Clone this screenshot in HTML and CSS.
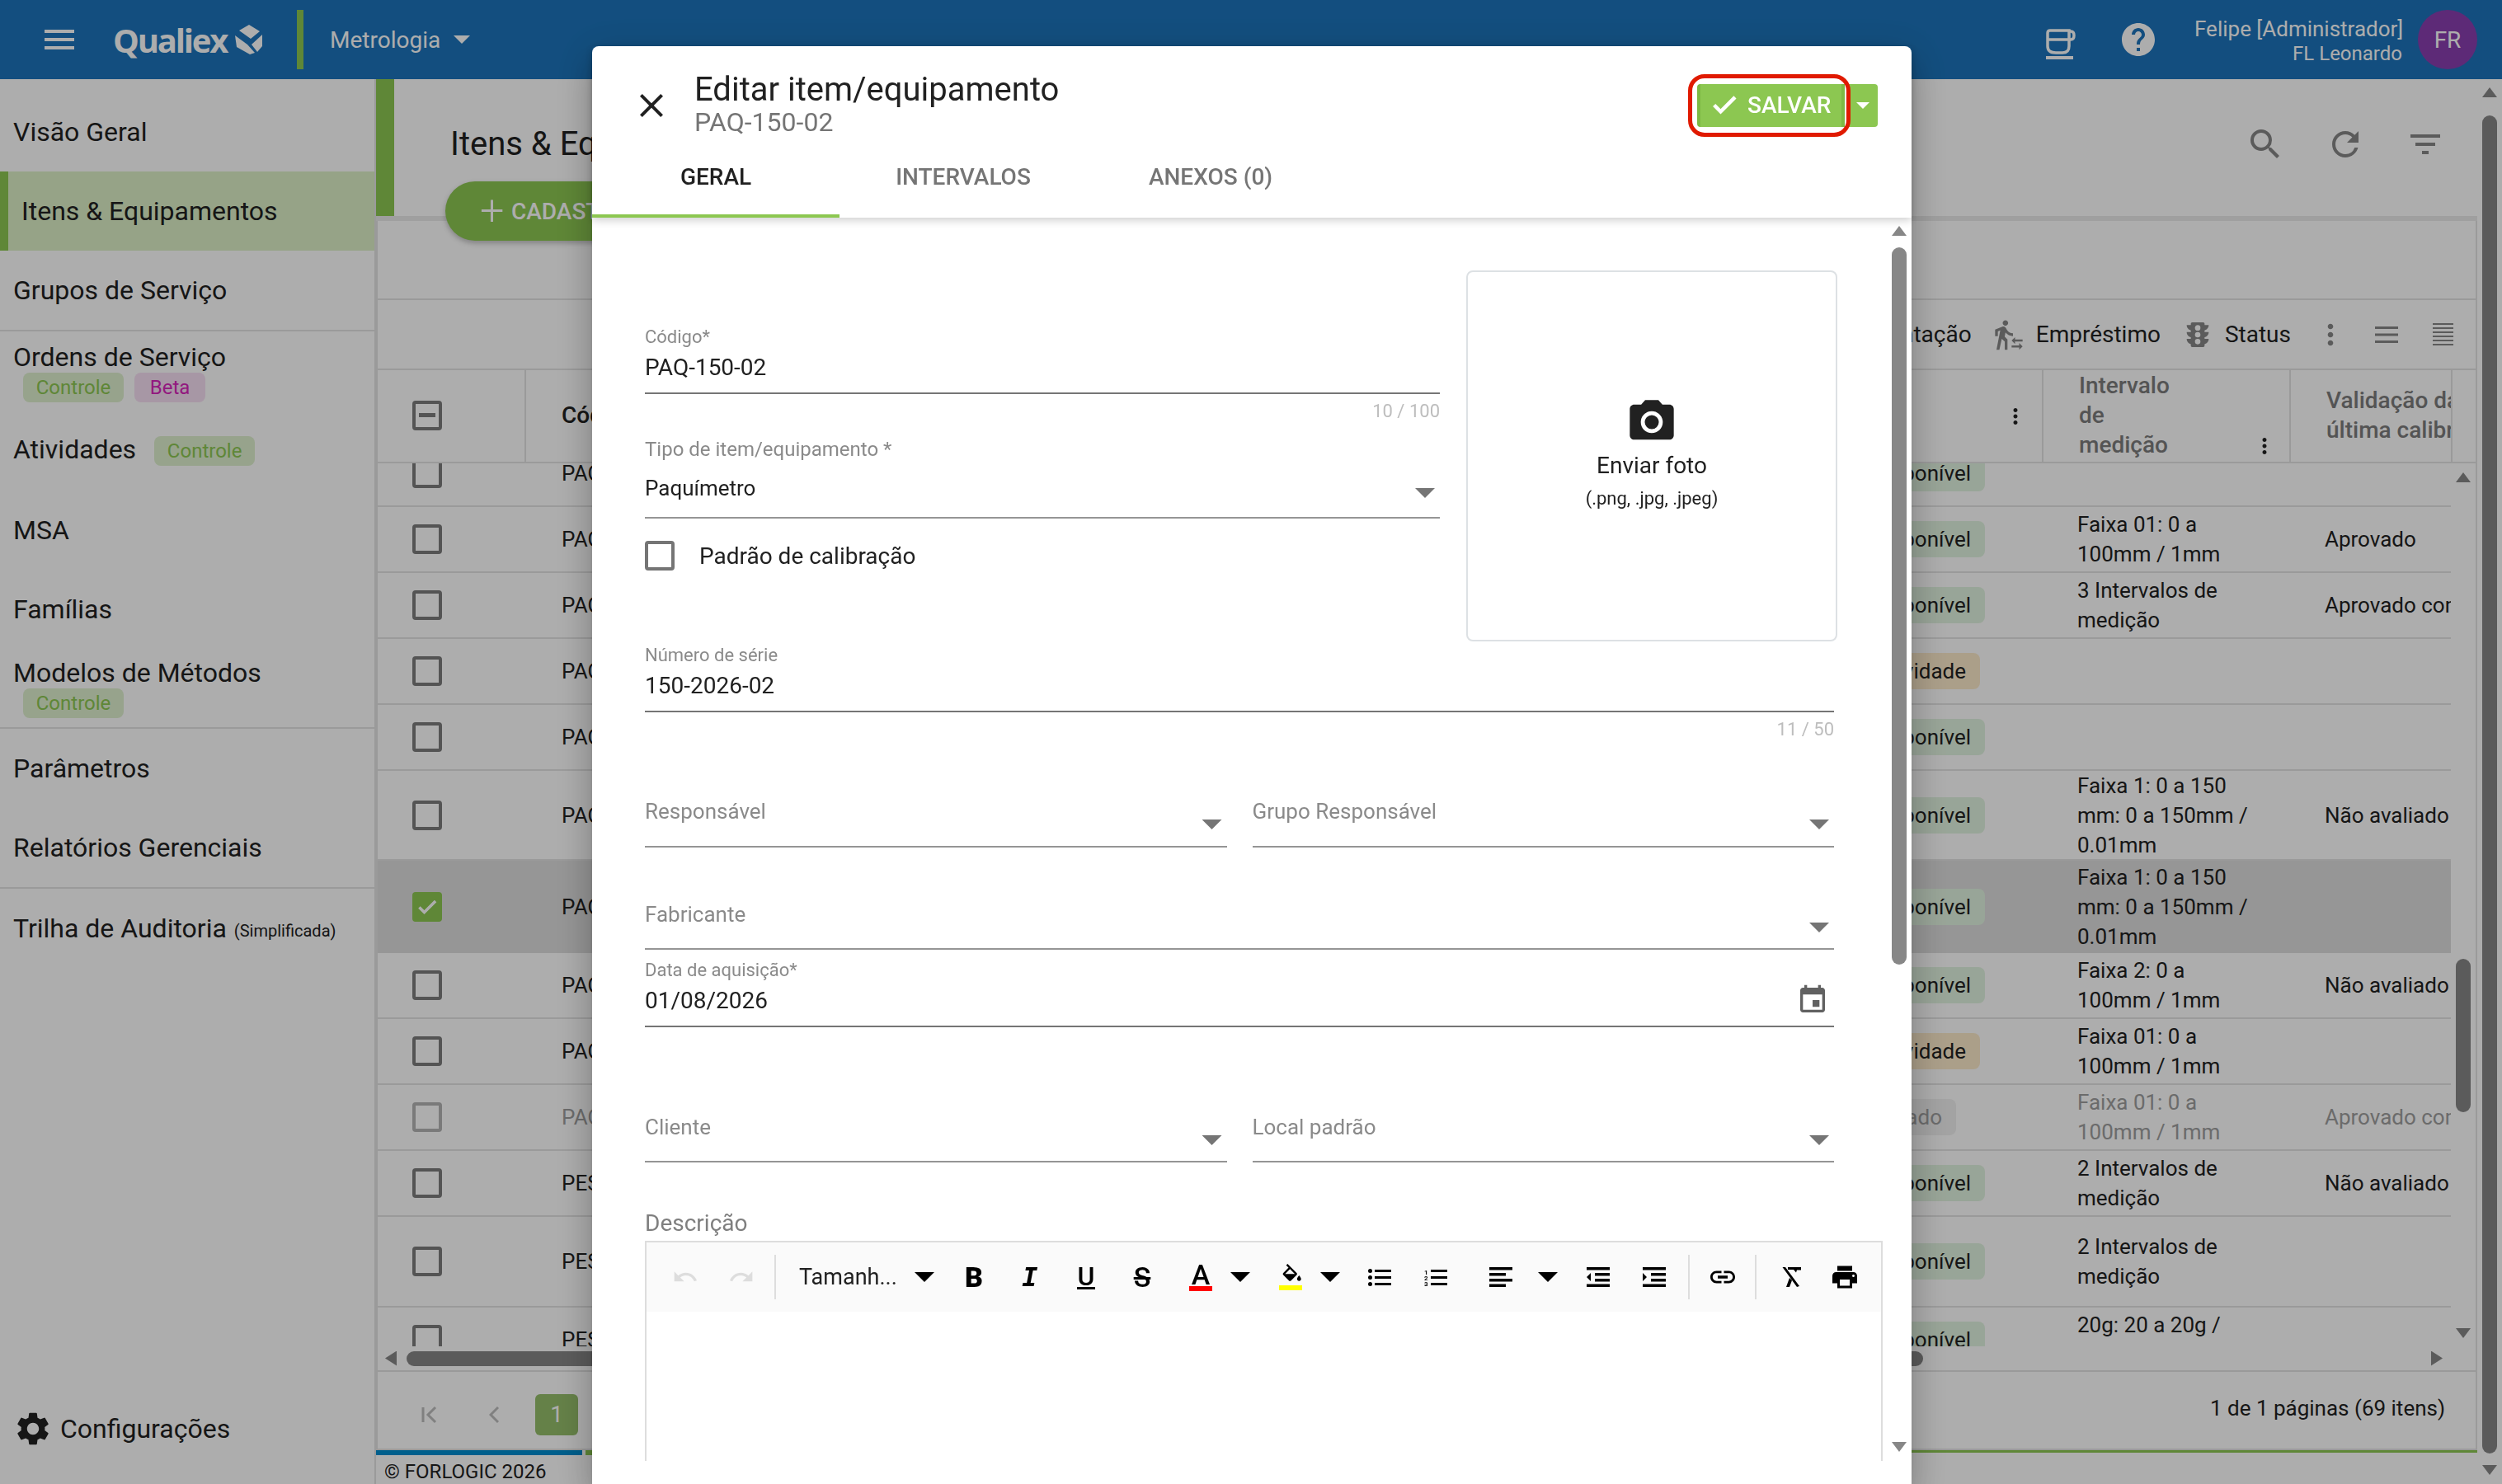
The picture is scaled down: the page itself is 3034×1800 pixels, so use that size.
FILE: index.html
```html
<!DOCTYPE html>
<html lang="pt-BR">
<head>
    <meta charset="UTF-8">
    <title>Itens &amp; Equipamentos</title>
    <link rel="stylesheet" href="styles.css">
</head>
<body>
    <!-- barra superior -->
    <header class="topbar">
        <div class="menu-btn"><span></span><span></span><span></span></div>
        <div class="logo-text">Qualiex</div>
        <svg class="logo-cube" viewBox="0 0 33 36"><path d="M17 0l13 8-11 9L5 7z"/><path d="M0 13l15 11 9 10-6 2-16-9z"/><path d="M33 12v14l-6 7-7-9z"/></svg>
        <div class="topbar-sep"></div>
        <div class="module">Metrologia</div>
        <div class="module-caret"></div>
        <svg class="cup-icon" viewBox="0 0 36 37" stroke="currentColor" stroke-width="3.5"><path d="M2 5q0-3 3-3h23v19q0 8-8 8h-8q-10 0-10-8zM2 13h26M28 3h2q4 0 4 5t-4 5h-2"/><path d="M0 35h33" stroke-width="4"/></svg>
        <svg class="help-icon" viewBox="0 0 24 24"><path d="M12 2C6.48 2 2 6.48 2 12s4.48 10 10 10 10-4.48 10-10S17.52 2 12 2zm1 17h-2v-2h2v2zm2.07-7.75l-.9.92C13.45 12.9 13 13.5 13 15h-2v-.5c0-1.1.45-2.1 1.17-2.83l1.24-1.26c.37-.36.59-.86.59-1.41 0-1.1-.9-2-2-2s-2 .9-2 2H8c0-2.21 1.79-4 4-4s4 1.79 4 4c0 .88-.36 1.68-.93 2.25z"/></svg>
        <div class="user">
            <div class="user-name">Felipe [Administrador]</div>
            <div class="user-org">FL Leonardo</div>
        </div>
        <div class="avatar">FR</div>
    </header>

    <div class="app">
        <!-- menu lateral -->
        <nav class="sidebar">
            <div class="nav-item">Visão Geral</div>
            <div class="nav-item active">Itens &amp; Equipamentos</div>
            <div class="nav-item divided">Grupos de Serviço</div>
            <div class="nav-item stacked">
                <div>Ordens de Serviço</div>
                <div class="badges"><span class="badge">Controle</span><span class="badge beta">Beta</span></div>
            </div>
            <div class="nav-item">Atividades<span class="badge inline">Controle</span></div>
            <div class="nav-item nudge">MSA</div>
            <div class="nav-item">Famílias</div>
            <div class="nav-item stacked divided">
                <div>Modelos de Métodos</div>
                <div class="badges"><span class="badge">Controle</span></div>
            </div>
            <div class="nav-item">Parâmetros</div>
            <div class="nav-item divided">Relatórios Gerenciais</div>
            <div class="nav-item">Trilha de Auditoria<small>(Simplificada)</small></div>
            <div class="nav-config">
                <svg class="icon-48" viewBox="0 0 24 24"><path d="M19.14 12.94c.04-.3.06-.61.06-.94 0-.32-.02-.64-.07-.94l2.03-1.58a.49.49 0 0 0 .12-.61l-1.92-3.32a.488.488 0 0 0-.59-.22l-2.39.96c-.5-.38-1.03-.7-1.62-.94l-.36-2.54a.484.484 0 0 0-.48-.41h-3.84c-.24 0-.43.17-.47.41l-.36 2.54c-.59.24-1.13.57-1.62.94l-2.39-.96c-.22-.08-.47 0-.59.22L2.74 8.87c-.12.21-.08.47.12.61l2.03 1.58c-.05.3-.09.63-.09.94s.02.64.07.94l-2.03 1.58a.49.49 0 0 0-.12.61l1.92 3.32c.12.22.37.29.59.22l2.39-.96c.5.38 1.03.7 1.62.94l.36 2.54c.05.24.24.41.48.41h3.84c.24 0 .44-.17.47-.41l.36-2.54c.59-.24 1.13-.56 1.62-.94l2.39.96c.22.08.47 0 .59-.22l1.92-3.32c.12-.22.07-.47-.12-.61l-2.01-1.58zM12 15.6c-1.98 0-3.6-1.62-3.6-3.6s1.62-3.6 3.6-3.6 3.6 1.62 3.6 3.6-1.62 3.6-3.6 3.6z"/></svg>
                <span>Configurações</span>
            </div>
        </nav>

        <main class="main">
            <!-- titulo da pagina -->
            <section class="page-head">
                <div class="page-title-box">
                    <h1 class="page-title">Itens &amp; Equipamentos</h1>
                    <div class="add-btn"><span class="add-plus">+</span>CADASTRAR NOVO ITEM</div>
                </div>
                <div class="page-actions">
                    <div class="action"><svg class="icon-48" viewBox="0 0 24 24"><path d="M15.5 14h-.79l-.28-.27A6.471 6.471 0 0 0 16 9.5 6.5 6.5 0 1 0 9.5 16c1.61 0 3.09-.59 4.23-1.57l.27.28v.79l5 4.99L20.49 19l-4.99-5zm-6 0C7.01 14 5 11.99 5 9.5S7.01 5 9.5 5 14 7.01 14 9.5 11.99 14 9.5 14z"/></svg></div>
                    <div class="action"><svg class="icon-48" viewBox="0 0 24 24"><path d="M17.65 6.35A7.958 7.958 0 0 0 12 4c-4.42 0-7.99 3.58-7.99 8s3.57 8 7.99 8c3.73 0 6.84-2.55 7.73-6h-2.08A5.99 5.99 0 0 1 12 18c-3.31 0-6-2.69-6-6s2.69-6 6-6c1.66 0 3.14.69 4.22 1.78L13 11h7V4l-2.35 2.35z"/></svg></div>
                    <div class="action"><svg class="icon-48" viewBox="0 0 24 24"><path d="M10 18h4v-2h-4v2zM3 6v2h18V6H3zm3 7h12v-2H6v2z"/></svg></div>
                </div>
            </section>
            <div class="band"></div>

            <section class="card">
                <div class="filter-row"></div>
                <div class="tool-row">
                    <div class="tool">Movimentação</div>
                    <div class="tool"><svg class="icon-40" viewBox="0 0 24 24"><path d="M16.49 15.5v-1.75L14 16.25l2.49 2.5V17H22v-1.5zm3.02 4.25H14v1.5h5.51V23L22 20.5 19.51 18zM9.5 5.5c1.1 0 2-.9 2-2s-.9-2-2-2-2 .9-2 2 .9 2 2 2zM5.75 8.9L3 23h2.1l1.75-8L9 17v6h2v-7.55L8.95 13.4l.6-3C10.85 12 12.8 13 15 13v-2c-1.85 0-3.45-1-4.35-2.45l-.95-1.6C9.35 6.35 8.7 6 8 6c-.25 0-.5.05-.75.15L2 8.3V13h2V9.65l1.75-.75"/></svg>Empréstimo</div>
                    <div class="tool"><svg class="icon-40" viewBox="0 0 24 24"><path d="M20 10h-3V8.86c1.72-.45 3-2 3-3.86h-3V4c0-.55-.45-1-1-1H8c-.55 0-1 .45-1 1v1H4c0 1.86 1.28 3.41 3 3.86V10H4c0 1.86 1.28 3.41 3 3.86V15H4c0 1.86 1.28 3.41 3 3.86V20c0 .55.45 1 1 1h8c.55 0 1-.45 1-1v-1.14c1.72-.45 3-2 3-3.86h-3v-1.14c1.72-.45 3-2 3-3.86zm-8 9a2 2 0 1 1 0-4 2 2 0 0 1 0 4zm0-5a2 2 0 1 1 0-4 2 2 0 0 1 0 4zm0-5a2 2 0 0 1-2-2c0-1.11.89-2 2-2a2 2 0 1 1 0 4z"/></svg>Status</div>
                    <div class="tool-btn first"><svg class="icon-40" viewBox="0 0 24 24"><path d="M12 8c1.1 0 2-.9 2-2s-.9-2-2-2-2 .9-2 2 .9 2 2 2zm0 2c-1.1 0-2 .9-2 2s.9 2 2 2 2-.9 2-2-.9-2-2-2zm0 6c-1.1 0-2 .9-2 2s.9 2 2 2 2-.9 2-2-.9-2-2-2z"/></svg></div>
                    <div class="tool-btn"><svg class="lines-icon" viewBox="0 0 28 20"><path d="M0 0h28v3H0zM0 8.500h28v3H0zM0 17h28v3H0z"/></svg></div>
                    <div class="tool-btn"><svg class="dense-icon" viewBox="0 0 25 27"><path d="M0 0h25v2H0zM0 5h25v2H0zM0 10h25v2H0zM0 15h25v2H0zM0 20h25v2H0zM0 25h25v2H0z"/></svg></div>
                </div>

                <!-- tabela -->
                <div class="table-head">
                    <div class="head-cell head-check"><span class="check minus"></span></div>
                    <div class="head-cell head-code">Código</div>
                    <div class="head-cell head-status">Status<svg class="kebab" viewBox="0 0 24 24"><path d="M12 8c1.100 0 2-.9 2-2s-.9-2-2-2-2 .9-2 2 .9 2 2 2zm0 2c-1.100 0-2 .9-2 2s.9 2 2 2 2-.9 2-2-.9-2-2-2zm0 6c-1.100 0-2 .9-2 2s.9 2 2 2 2-.9 2-2-.9-2-2-2z"/></svg></div>
                    <div class="head-cell head-interval"><span>Intervalo<br>de<br>medição</span><svg class="kebab" viewBox="0 0 24 24"><path d="M12 8c1.100 0 2-.9 2-2s-.9-2-2-2-2 .9-2 2 .9 2 2 2zm0 2c-1.100 0-2 .9-2 2s.9 2 2 2 2-.9 2-2-.9-2-2-2zm0 6c-1.100 0-2 .9-2 2s.9 2 2 2 2-.9 2-2-.9-2-2-2z"/></svg></div>
                    <div class="head-cell head-valid">Validação da<br>última calibração</div>
                    <div class="head-cell head-gutter"></div>
                </div>
                <div class="table-body">
                    <div class="rows">
                        <div class="rows-inner">
                            <div class="row"><div class="cell-check"><span class="check"></span></div><div class="cell-code">PAQ-100-01</div><div class="cell-status"><span class="chip">Disponível</span></div><div class="cell-interval"></div><div class="cell-valid"></div></div>
                            <div class="row"><div class="cell-check"><span class="check"></span></div><div class="cell-code">PAQ-100-02</div><div class="cell-status"><span class="chip">Disponível</span></div><div class="cell-interval">Faixa 01: 0 a<br>100mm / 1mm</div><div class="cell-valid">Aprovado</div></div>
                            <div class="row"><div class="cell-check"><span class="check"></span></div><div class="cell-code">PAQ-100-03</div><div class="cell-status"><span class="chip">Disponível</span></div><div class="cell-interval">3 Intervalos de<br>medição</div><div class="cell-valid">Aprovado com ressalvas</div></div>
                            <div class="row"><div class="cell-check"><span class="check"></span></div><div class="cell-code">PAQ-100-04</div><div class="cell-status"><span class="chip amber">Inatividade</span></div><div class="cell-interval"></div><div class="cell-valid"></div></div>
                            <div class="row"><div class="cell-check"><span class="check"></span></div><div class="cell-code">PAQ-100-05</div><div class="cell-status"><span class="chip">Disponível</span></div><div class="cell-interval"></div><div class="cell-valid"></div></div>
                            <div class="row before-selected"><div class="cell-check"><span class="check"></span></div><div class="cell-code">PAQ-150-01</div><div class="cell-status"><span class="chip">Disponível</span></div><div class="cell-interval">Faixa 1: 0 a 150<br>mm: 0 a 150mm /<br>0.01mm</div><div class="cell-valid">Não avaliado</div></div>
                            <div class="row selected"><div class="cell-check"><span class="check checked"><svg viewBox="0 0 24 24"><path d="M9 16.170L4.830 12l-1.420 1.410L9 19 21 7l-1.410-1.410z"/></svg></span></div><div class="cell-code">PAQ-150-02</div><div class="cell-status"><span class="chip">Disponível</span></div><div class="cell-interval">Faixa 1: 0 a 150<br>mm: 0 a 150mm /<br>0.01mm</div><div class="cell-valid"></div></div>
                            <div class="row"><div class="cell-check"><span class="check"></span></div><div class="cell-code">PAQ-200-01</div><div class="cell-status"><span class="chip">Disponível</span></div><div class="cell-interval">Faixa 2: 0 a<br>100mm / 1mm</div><div class="cell-valid">Não avaliado</div></div>
                            <div class="row"><div class="cell-check"><span class="check"></span></div><div class="cell-code">PAQ-200-02</div><div class="cell-status"><span class="chip amber">Inatividade</span></div><div class="cell-interval">Faixa 01: 0 a<br>100mm / 1mm</div><div class="cell-valid"></div></div>
                            <div class="row disabled"><div class="cell-check"><span class="check"></span></div><div class="cell-code">PAQ-200-03</div><div class="cell-status"><span class="chip grey">Inativado</span></div><div class="cell-interval">Faixa 01: 0 a<br>100mm / 1mm</div><div class="cell-valid">Aprovado com ressalvas</div></div>
                            <div class="row"><div class="cell-check"><span class="check"></span></div><div class="cell-code">PES-001-01</div><div class="cell-status"><span class="chip">Disponível</span></div><div class="cell-interval">2 Intervalos de<br>medição</div><div class="cell-valid">Não avaliado</div></div>
                            <div class="row tall"><div class="cell-check"><span class="check"></span></div><div class="cell-code">PES-001-02</div><div class="cell-status"><span class="chip">Disponível</span></div><div class="cell-interval">2 Intervalos de<br>medição</div><div class="cell-valid"></div></div>
                            <div class="row"><div class="cell-check"><span class="check"></span></div><div class="cell-code">PES-001-03</div><div class="cell-status"><span class="chip">Disponível</span></div><div class="cell-interval">20g: 20 a 20g /<br>0.00001g</div><div class="cell-valid"></div></div>
                        </div>
                    </div>
                    <div class="vbar table-vbar">
                        <div class="arrow-up"></div>
                        <div class="thumb"></div>
                        <div class="arrow-down"></div>
                    </div>
                </div>
                <div class="hbar">
                    <div class="arrow-left"></div>
                    <div class="hthumb"></div>
                    <div class="arrow-right"></div>
                </div>
                <div class="pager">
                    <svg class="pager-first" viewBox="0 0 20 24" stroke="currentColor" stroke-width="3"><path d="M2 3v18M17 3l-9 9 9 9"/></svg>
                    <svg class="pager-prev" viewBox="0 0 12 24" stroke="currentColor" stroke-width="3"><path d="M11 3l-9 9 9 9"/></svg>
                    <div class="pager-num">1</div>
                    <div class="pager-info">1 de 1 páginas (69 itens)</div>
                </div>
            </section>

            <div class="progress">
                <div class="progress-blue"></div>
                <div class="progress-green"></div>
                <div class="progress-thin"></div>
            </div>
            <footer class="footer">© FORLOGIC 2026</footer>
        </main>

        <div class="vbar page-vbar">
            <div class="arrow-up"></div>
            <div class="thumb"></div>
            <div class="arrow-down"></div>
        </div>
    </div>

    <div class="backdrop"></div>

    <!-- modal de edicao -->
    <div class="modal">
        <div class="modal-head">
            <div class="modal-top">
                <svg class="modal-close" viewBox="0 0 24 24"><path d="M19 6.410L17.590 5 12 10.590 6.410 5 5 6.410 10.590 12 5 17.590 6.410 19 12 13.410 17.590 19 19 17.590 13.410 12z"/></svg>
                <div class="modal-titles">
                    <div class="modal-title">Editar item/equipamento</div>
                    <div class="modal-sub">PAQ-150-02</div>
                </div>
                <div class="save-group">
                    <div class="save-btn">
                        <svg class="save-check" viewBox="0 0 24 24"><path d="M9 16.170L4.830 12l-1.420 1.410L9 19 21 7l-1.410-1.410z"/></svg>
                        SALVAR
                    </div>
                    <div class="save-more"><span></span></div>
                    <div class="save-mark"></div>
                </div>
            </div>
            <div class="tabs">
                <div class="tab active">GERAL</div>
                <div class="tab">INTERVALOS</div>
                <div class="tab">ANEXOS (0)</div>
            </div>
        </div>

        <div class="modal-body">
            <div class="form">
                <div class="form-top">
                    <div class="form-left">
                        <div class="field">
                            <div class="field-label">Código*</div>
                            <div class="field-value">PAQ-150-02</div>
                        </div>
                        <div class="field-count">10 / 100</div>
                        <div class="field select-field">
                            <div class="field-label big">Tipo de item/equipamento *</div>
                            <div class="select-row"><span>Paquímetro</span><span class="caret"></span></div>
                        </div>
                        <label class="check-row"><span class="check"></span>Padrão de calibração</label>
                    </div>
                    <div class="photo">
                        <svg class="photo-icon" viewBox="0 0 24 24"><path d="M12 15.200a3.200 3.200 0 1 0 0-6.400 3.200 3.200 0 0 0 0 6.400z"/><path d="M9 2 7.170 4H4c-1.100 0-2 .9-2 2v12c0 1.100.9 2 2 2h16c1.100 0 2-.9 2-2V6c0-1.100-.9-2-2-2h-3.170L15 2H9zm3 15c-2.760 0-5-2.240-5-5s2.240-5 5-5 5 2.240 5 5-2.240 5-5 5z"/></svg>
                        <div class="photo-text">Enviar foto</div>
                        <div class="photo-hint">(.png, .jpg, .jpeg)</div>
                    </div>
                </div>

                <div class="field wide serial">
                    <div class="field-label">Número de série</div>
                    <div class="field-value">150-2026-02</div>
                </div>
                <div class="field-count wide">11 / 50</div>

                <div class="field-pair first-pair">
                    <div class="field empty"><span>Responsável</span><span class="caret"></span></div>
                    <div class="field empty"><span>Grupo Responsável</span><span class="caret"></span></div>
                </div>
                <div class="field empty wide maker"><span>Fabricante</span><span class="caret"></span></div>
                <div class="field wide date">
                    <div class="field-label">Data de aquisição*</div>
                    <div class="field-value date-value">01/08/2026
                        <svg class="date-icon" viewBox="0 0 24 24"><path d="M17 12h-5v5h5v-5zM16 1v2H8V1H6v2H5c-1.110 0-1.990.9-1.990 2L3 19c0 1.100.89 2 2 2h14c1.100 0 2-.9 2-2V5c0-1.100-.9-2-2-2h-1V1h-2zm3 18H5V8h14v11z"/></svg>
                    </div>
                </div>
                <div class="field-pair client-pair">
                    <div class="field empty"><span>Cliente</span><span class="caret"></span></div>
                    <div class="field empty"><span>Local padrão</span><span class="caret"></span></div>
                </div>

                <div class="editor-label">Descrição</div>
                <div class="editor">
                    <div class="editor-tools">
                        <div class="ed-btn muted"><svg class="ed-32" viewBox="0 0 24 24"><path d="M12.500 8c-2.650 0-5.050.99-6.900 2.600L2 7v9h9l-3.620-3.620c1.390-1.160 3.160-1.880 5.120-1.880 3.540 0 6.550 2.310 7.600 5.500l2.370-.78C21.080 11.030 17.150 8 12.500 8z"/></svg></div>
                        <div class="ed-btn muted"><svg class="ed-32 flip" viewBox="0 0 24 24"><path d="M12.500 8c-2.650 0-5.050.99-6.900 2.600L2 7v9h9l-3.620-3.620c1.390-1.160 3.160-1.880 5.120-1.880 3.540 0 6.550 2.310 7.600 5.500l2.370-.78C21.080 11.030 17.150 8 12.500 8z"/></svg></div>
                        <div class="ed-sep sep-a"></div>
                        <div class="ed-size">Tamanh...</div>
                        <div class="ed-caret size-caret"></div>
                        <div class="ed-btn bold-btn"><span class="glyph-b">B</span></div>
                        <div class="ed-btn"><span class="glyph-i">I</span></div>
                        <div class="ed-btn"><span class="glyph-u">U</span></div>
                        <div class="ed-btn"><span class="glyph-s">S</span></div>
                        <div class="ed-btn color-btn"><span class="glyph-a">A</span><span class="bar-red"></span></div>
                        <div class="ed-caret near-caret"></div>
                        <div class="ed-btn fill-btn">
                            <svg class="fill-icon" viewBox="0 0 22 18"><path d="M16.560 8.940 7.620 0 6.210 1.410l2.380 2.380-5.150 5.150c-.59.59-.59 1.540 0 2.120l5.500 5.500c.29.29.68.44 1.060.44s.77-.15 1.060-.44l5.500-5.500c.59-.58.59-1.530 0-2.120zM5.210 10 10 5.210 14.790 10H5.210zM19 11.500s-2 2.170-2 3.500c0 1.100.9 2 2 2s2-.9 2-2c0-1.330-2-3.500-2-3.500z"/></svg>
                            <span class="bar-yellow"></span>
                        </div>
                        <div class="ed-caret near-caret"></div>
                        <div class="ed-btn list-btn"><svg class="ed-list" viewBox="0 0 28 21"><circle cx="2.500" cy="2.500" r="2.500"/><circle cx="2.500" cy="10.500" r="2.500"/><circle cx="2.500" cy="18.500" r="2.500"/><path d="M8 1h20v3H8zM8 9h20v3H8zM8 17h20v3H8z"/></svg></div>
                        <div class="ed-btn"><svg class="ed-list" viewBox="0 0 28 21"><text class="ol-num" x="0" y="6.500">1</text><text class="ol-num" x="0" y="14">2</text><text class="ol-num" x="0" y="21">3</text><path d="M8 1h20v3H8zM8 9h20v3H8zM8 17h20v3H8z"/></svg></div>
                        <div class="ed-btn align-btn"><svg class="ed-lines" viewBox="0 0 28 24"><path d="M0 0h28v3.500H0zM0 7h20v3.500H0zM0 14h28v3.500H0zM0 20.500h20V24H0z"/></svg></div>
                        <div class="ed-caret align-caret"></div>
                        <div class="ed-btn outdent-btn"><svg class="ed-lines" viewBox="0 0 28 24"><path d="M0 0h28v3.500H0zM10 7h18v3.500H10zM10 14h18v3.500H10zM0 20.500h28V24H0zM5 7v10l-5-5z"/></svg></div>
                        <div class="ed-btn"><svg class="ed-lines" viewBox="0 0 28 24"><path d="M0 0h28v3.500H0zM10 7h18v3.500H10zM10 14h18v3.500H10zM0 20.500h28V24H0zM0 7v10l5-5z"/></svg></div>
                        <div class="ed-sep sep-b"></div>
                        <div class="ed-btn link-btn"><svg class="ed-36" viewBox="0 0 24 24"><path d="M3.900 12c0-1.710 1.390-3.100 3.100-3.100h4V7H7c-2.760 0-5 2.240-5 5s2.240 5 5 5h4v-1.900H7c-1.710 0-3.100-1.390-3.100-3.100zM8 13.200h8v-2.400H8v2.400zm9-6.200h-4v1.900h4c1.710 0 3.100 1.390 3.100 3.100s-1.390 3.100-3.100 3.100h-4V17h4c2.760 0 5-2.240 5-5s-2.240-5-5-5z"/></svg></div>
                        <div class="ed-sep sep-c"></div>
                        <div class="ed-btn clear-btn"><svg class="ed-clear" viewBox="0 0 24 24"><path d="M8 0h16v3.500h-5l-1 3-3-3.500H8zM1.500 0L5 0l17 23-3 1zM10 13l3 3-3 8H6z"/></svg></div>
                        <div class="ed-btn print-btn"><svg class="ed-36" viewBox="0 0 24 24"><path d="M19 8H5c-1.660 0-3 1.340-3 3v6h4v4h12v-4h4v-6c0-1.660-1.340-3-3-3zm-3 11H8v-5h8v5zm3-7c-.55 0-1-.45-1-1s.45-1 1-1 1 .45 1 1-.45 1-1 1zm-1-9H6v4h12V3z"/></svg></div>
                    </div>
                    <div class="editor-area"></div>
                </div>
            </div>
            <div class="vbar modal-vbar">
                <div class="arrow-up"></div>
                <div class="thumb"></div>
                <div class="arrow-down"></div>
            </div>
        </div>
    </div>
</body>
</html>
```

FILE: styles.css
```css
* {
    box-sizing: border-box;
}
html, body {
    margin: 0;
    height: 1800px;
    overflow: hidden;
}
body {
    font-family: Roboto, "Noto Sans", sans-serif;
    font-size: 28px;
    color: #212121;
    background: #fff;
}
svg {
    fill: currentColor;
    display: block;
    flex: none;
}
.icon-48 {
    width: 48px;
    height: 48px;
}
.icon-40 {
    width: 40px;
    height: 40px;
}

/* barra superior */
.topbar {
    height: 96px;
    background: #1c74bb;
    color: #fff;
    display: flex;
    align-items: center;
    padding: 0 30px 0 54px;
}
.menu-btn {
    width: 36px;
}
.menu-btn span {
    display: block;
    height: 4px;
    background: #fff;
    margin-bottom: 6px;
}
.menu-btn span:last-child {
    margin-bottom: 0;
}
.logo-text {
    margin-left: 47px;
    width: 148px;
    font-family: "Open Sans", Roboto, sans-serif;
    font-size: 40px;
    font-weight: 700;
    letter-spacing: -2.2px;
}
.logo-cube {
    width: 33px;
    height: 36px;
    margin-left: 0;
}
.topbar-sep {
    width: 8px;
    height: 72px;
    background: #8cc751;
    margin-left: 42px;
}
.module {
    margin-left: 32px;
    width: 135px;
}
.module-caret {
    margin-left: 15px;
    border-left: 10px solid transparent;
    border-right: 10px solid transparent;
    border-top: 10px solid #fff;
}
.cup-icon {
    fill: none;
    width: 36px;
    height: 37px;
    margin-left: auto;
    margin-top: 11px;
}
.help-icon {
    width: 48px;
    height: 48px;
    margin-left: 52px;
}
.user {
    width: 252px;
    margin-left: 44px;
    text-align: right;
    font-size: 26px;
}
.user-name {
    line-height: 32px;
    white-space: nowrap;
}
.user-org {
    font-size: 24px;
    line-height: 26px;
    margin-top: 1px;
}
.avatar {
    width: 72px;
    height: 72px;
    border-radius: 50%;
    background: #8a3eb0;
    margin-left: 19px;
    display: flex;
    align-items: center;
    justify-content: center;
}

/* estrutura */
.app {
    display: flex;
    height: 1704px;
}
.sidebar {
    width: 456px;
    flex: none;
    border-right: 2px solid #e4e4e4;
    padding-top: 16px;
    display: flex;
    flex-direction: column;
    font-size: 32px;
}
.nav-item {
    height: 96px;
    display: flex;
    align-items: center;
    padding-left: 16px;
    flex: none;
}
.nav-item.active {
    background: #ddf1c8;
    border-left: 10px solid #8cc751;
}
.nav-item.divided {
    height: 98px;
    border-bottom: 2px solid #e4e4e4;
}
.nav-item.stacked {
    display: block;
    height: 95px;
    padding-top: 12px;
    line-height: 38px;
}
.nav-item.stacked.divided {
    height: 97px;
    padding-top: 10px;
}
.nav-item.nudge {
    margin-top: 2px;
}
.nav-item small {
    font-size: 20px;
    margin-left: 9px;
    padding-top: 6px;
}
.badges {
    display: flex;
    gap: 13px;
    margin-left: 12px;
}
.badge {
    height: 36px;
    border-radius: 8px;
    background: #dff0cf;
    color: #8cc751;
    font-size: 24px;
    line-height: 36px;
    width: 122px;
    text-align: center;
}
.badge.beta {
    width: 86px;
    background: #f7dff3;
    color: #d825bb;
}
.badge.inline {
    margin-left: 22px;
    margin-top: 4px;
}
.nav-config {
    margin-top: auto;
    padding: 0 0 43px 16px;
    display: flex;
    align-items: center;
    gap: 9px;
}

.main {
    width: 2548px;
    flex: none;
    display: flex;
    flex-direction: column;
}
.page-head {
    height: 166px;
    flex: none;
    border-left: 22px solid #8cc751;
    display: flex;
    position: relative;
}
.page-title-box {
    padding: 55px 0 0 62px;
}
.page-title {
    margin: 0 0 0 6px;
    font-size: 40px;
    font-weight: 400;
    line-height: 48px;
}
.add-btn {
    margin-top: 21px;
    height: 72px;
    width: 520px;
    border-radius: 36px;
    background: #8cc751;
    color: #fff;
    font-weight: 500;
    display: flex;
    align-items: center;
    padding-left: 42px;
    box-shadow: 0 3px 6px rgba(0,0,0,.25);
    position: relative;
    z-index: 1;
}
.add-plus {
    font-size: 52px;
    font-weight: 300;
    width: 38px;
    line-height: 1;
}
.page-actions {
    margin-left: auto;
    display: flex;
    padding: 55px 15px 0 0;
    color: #878787;
}
.action {
    width: 97px;
    display: flex;
    justify-content: center;
}
.band {
    height: 6px;
    background: #ebebeb;
    flex: none;
}
.card {
    flex: none;
    border-left: 2px solid #e4e4e4;
    border-right: 2px solid #e4e4e4;
}
.filter-row {
    height: 96px;
    border-bottom: 2px solid #e4e4e4;
}
.tool-row {
    height: 85px;
    border-bottom: 2px solid #e4e4e4;
    display: flex;
    align-items: center;
    justify-content: flex-end;
    padding-right: 6px;
}
.tool {
    display: flex;
    align-items: center;
    gap: 13px;
    margin-left: 25px;
}
.tool svg {
    color: #878787;
}
.tool-btn {
    width: 68px;
    display: flex;
    justify-content: center;
    color: #878787;
}
.tool-btn.first {
    margin-left: 14px;
}
.lines-icon {
    width: 28px;
    height: 20px;
}
.dense-icon {
    width: 25px;
    height: 27px;
}

/* tabela */
.table-head {
    display: grid;
    grid-template-columns: 178px 1fr 297px 300px 196px 30px;
    height: 113px;
    border-bottom: 2px solid #e4e4e4;
    color: #7d7d7d;
    font-weight: 500;
    line-height: 36px;
}
.head-cell {
    display: flex;
    align-items: center;
    border-left: 2px solid #e4e4e4;
    padding-bottom: 2px;
}
.head-check {
    border-left: 0;
    padding-left: 42px;
}
.head-code {
    padding-left: 43px;
    color: #212121;
}
.head-status {
    justify-content: space-between;
    padding: 0 17px 0 43px;
}
.kebab {
    width: 30px;
    height: 30px;
    color: #212121;
}
.head-interval {
    padding-left: 43px;
}
.head-interval .kebab {
    margin: auto 15px 2px auto;
}
.head-valid {
    padding-left: 43px;
    white-space: nowrap;
    overflow: hidden;
}
.check {
    display: block;
    width: 36px;
    height: 36px;
    border: 4px solid #7d7d7d;
    border-radius: 4px;
    flex: none;
}
.check.minus::after {
    content: "";
    display: block;
    height: 5px;
    margin: 11.5px 4px 0;
    background: #7d7d7d;
}
.check.checked {
    background: #8cc751;
    border-color: #8cc751;
    color: #fff;
}
.check.checked svg {
    width: 28px;
    height: 28px;
    stroke: currentColor;
    stroke-width: 1;
}
.table-body {
    height: 1071px;
    display: flex;
}
.rows {
    width: 2514px;
    overflow: hidden;
}
.rows-inner {
    margin-top: -27px;
}
.row {
    display: grid;
    grid-template-columns: 178px 1fr 297px 300px 196px;
    height: 80px;
    align-items: center;
    border-bottom: 2px solid #e4e4e4;
    font-size: 26px;
    line-height: 36px;
}
.row.tall {
    height: 110px;
}
.row.before-selected {
    height: 109px;
}
.row.selected {
    height: 112px;
    background: #ddd;
    border-bottom: 0;
}
.row.disabled {
    color: #9e9e9e;
}
.row.disabled .check {
    border-color: #b4b4b4;
}
.cell-check {
    padding-left: 42px;
}
.cell-code {
    padding-left: 45px;
}
.cell-status {
    display: flex;
    justify-content: flex-end;
    padding-right: 69px;
}
.chip {
    height: 44px;
    line-height: 44px;
    padding: 0 17px;
    border-radius: 8px;
    background: #e1f3e0;
    white-space: nowrap;
}
.chip.amber {
    background: #fdebcb;
    margin-right: 6px;
}
.chip.grey {
    background: #f0f0f0;
    margin-right: 35px;
}
.cell-interval {
    padding-left: 43px;
    white-space: nowrap;
}
.cell-valid {
    padding-left: 43px;
    white-space: nowrap;
    overflow: hidden;
}

/* barras de rolagem */
.vbar {
    width: 18px;
    flex: none;
    display: flex;
    flex-direction: column;
    align-items: center;
}
.thumb {
    width: 18px;
    border-radius: 9px;
    background: #878787;
}
.arrow-up,
.arrow-down {
    width: 18px;
    height: 12px;
    flex: none;
    background: #878787;
}
.arrow-up {
    clip-path: polygon(50% 0, 100% 100%, 0 100%);
}
.arrow-down {
    clip-path: polygon(0 0, 100% 0, 50% 100%);
    margin-top: auto;
}
.table-vbar {
    margin-left: 6px;
    padding: 11px 0 10px;
}
.table-vbar .thumb {
    height: 186px;
    margin-top: 578px;
}
.page-vbar {
    margin-left: 6px;
    padding: 10px 0 11px;
}
.page-vbar .thumb {
    height: 1623px;
    margin-top: 22px;
}
.modal-vbar {
    padding: 10px 0 11px;
    margin-right: 6px;
}
.modal-vbar .thumb {
    height: 870px;
    margin-top: 14px;
}
.hbar {
    height: 31px;
    border-bottom: 2px solid #e4e4e4;
    display: flex;
    align-items: center;
    padding-left: 9px;
}
.arrow-left,
.arrow-right {
    width: 14px;
    height: 18px;
    background: #878787;
    flex: none;
}
.arrow-left {
    clip-path: polygon(100% 0, 100% 100%, 0 50%);
}
.arrow-right {
    clip-path: polygon(0 0, 100% 50%, 0 100%);
    margin: 0 40px 0 auto;
}
.hthumb {
    width: 1839px;
    height: 18px;
    margin-left: 12px;
    border-radius: 9px;
    background: #878787;
}
.pager {
    height: 95px;
    padding-top: 10px;
    border-bottom: 2px solid #e4e4e4;
    display: flex;
    align-items: center;
}
.pager-first {
    fill: none;
    width: 20px;
    height: 24px;
    margin-left: 53px;
    color: #bdbdbd;
}
.pager-prev {
    fill: none;
    width: 12px;
    height: 24px;
    margin-left: 62px;
    color: #bdbdbd;
}
.pager-num {
    width: 52px;
    height: 50px;
    margin-left: 44px;
    border-radius: 6px;
    background: #95be6b;
    color: #fff;
    display: flex;
    align-items: center;
    justify-content: center;
}
.pager-info {
    font-size: 26px;
    margin-left: auto;
    padding-right: 37px;
    margin-top: -15px;
}
.progress {
    display: flex;
    align-items: flex-start;
    height: 6px;
    flex: none;
}
.progress-blue {
    width: 250px;
    height: 6px;
    background: #008cce;
}
.progress-green {
    width: 1608px;
    height: 6px;
    margin-left: 4px;
    background: #8cc751;
}
.progress-thin {
    flex: 1;
    height: 3px;
    background: #8cc751;
}
.footer {
    font-size: 24px;
    line-height: 40px;
    padding-left: 10px;
}

/* modal */
.backdrop {
    position: fixed;
    inset: 0;
    background: rgba(0,0,0,.32);
    z-index: 10;
}
.modal {
    position: fixed;
    left: 718px;
    top: 56px;
    width: 1600px;
    height: 1744px;
    background: #fff;
    border-radius: 8px 8px 0 0;
    display: flex;
    flex-direction: column;
    padding-bottom: 28px;
    z-index: 11;
    box-shadow: 0 11px 15px -7px rgba(0,0,0,.2), 0 24px 38px 3px rgba(0,0,0,.14), 0 9px 46px 8px rgba(0,0,0,.12);
}
.modal-head {
    height: 208px;
    flex: none;
    box-shadow: 0 3px 10px rgba(0,0,0,.2);
    position: relative;
    z-index: 1;
}
.modal-top {
    height: 112px;
    display: flex;
    padding: 29px 41px 0 48px;
    position: relative;
}
.modal-close {
    width: 48px;
    height: 48px;
    margin-top: 19px;
}
.modal-titles {
    margin-left: 28px;
}
.modal-title {
    font-size: 40px;
    line-height: 48px;
}
.modal-sub {
    font-size: 32px;
    line-height: 30px;
    color: #757575;
}
.save-group {
    margin-left: auto;
    margin-top: 17px;
    display: flex;
    gap: 3px;
    height: 52px;
    color: #fff;
    font-weight: 500;
    position: relative;
}
.save-btn {
    width: 179px;
    background: #8cc751;
    border-radius: 4px 0 0 4px;
    border-left: 4px solid #7db944;
    border-right: 4px solid #7db944;
    display: flex;
    align-items: center;
    padding: 0 0 2px 11px;
    gap: 10px;
}
.save-check {
    width: 36px;
    height: 36px;
    stroke: currentColor;
    stroke-width: 1;
}
.save-more {
    width: 37px;
    background: #8cc751;
    border-radius: 0 4px 4px 0;
    display: flex;
    align-items: center;
    justify-content: center;
}
.save-more span {
    border-left: 8px solid transparent;
    border-right: 8px solid transparent;
    border-top: 8px solid #fff;
}
.save-mark {
    position: absolute;
    left: -11px;
    top: -12px;
    width: 197px;
    height: 76px;
    border: 5px solid #e01a00;
    border-radius: 20px;
}
.tabs {
    height: 96px;
    display: flex;
}
.tab {
    width: 300px;
    display: flex;
    align-items: center;
    justify-content: center;
    font-weight: 500;
    color: #757575;
    border-bottom: 4px solid transparent;
}
.tab.active {
    color: #212121;
    border-bottom-color: #8cc751;
}
.modal-body {
    flex: 1;
    min-height: 0;
    display: flex;
    justify-content: space-between;
    overflow: hidden;
}
.form {
    width: 1576px;
    padding: 64px 0 0 64px;
}
.form-top {
    display: flex;
    width: 1446px;
    gap: 32px;
}
.form-left {
    width: 964px;
    padding-top: 67px;
}
.field {
    border-bottom: 2px solid #757575;
    padding-bottom: 12px;
}
.field-label {
    font-size: 22px;
    line-height: 28px;
    color: #8a8a8a;
}
.field-label.big {
    font-size: 24px;
}
.field-value {
    margin-top: 5px;
    line-height: 36px;
}
.field-count {
    font-size: 22px;
    line-height: 28px;
    margin-top: 7px;
    text-align: right;
    color: #bdbdbd;
}
.select-field {
    margin-top: 18px;
    padding-bottom: 17px;
    border-bottom-color: #959595;
}
.select-row {
    margin-top: 15px;
    font-size: 26px;
    line-height: 36px;
    display: flex;
    justify-content: space-between;
    padding-right: 6px;
}
.caret {
    width: 24px;
    height: 12px;
    margin-top: 18px;
    flex: none;
    background: #757575;
    clip-path: polygon(0 0, 100% 0, 50% 100%);
}
.check-row {
    margin-top: 27px;
    display: flex;
    align-items: center;
    gap: 30px;
}
.check-row .check {
    border-color: #757575;
}
.photo {
    width: 450px;
    height: 450px;
    border: 2px solid #dde1e4;
    border-radius: 8px;
    display: flex;
    flex-direction: column;
    align-items: center;
    padding-top: 150px;
}
.photo-icon {
    width: 64px;
    height: 64px;
}
.photo-text {
    line-height: 36px;
    margin-top: 3px;
}
.photo-hint {
    font-size: 22px;
    line-height: 32px;
    margin-top: 6px;
}
.wide {
    width: 1442px;
}
.field.serial {
    margin-top: 3px;
}
.field-pair {
    display: flex;
    gap: 31px;
    width: 1442px;
}
.field-pair .field {
    flex: 1;
}
.first-pair {
    margin-top: 71px;
}
.field.empty {
    display: flex;
    justify-content: space-between;
    font-size: 26px;
    line-height: 28px;
    color: #8a8a8a;
    padding-bottom: 27px;
    padding-right: 6px;
    border-bottom-color: #959595;
}
.field.empty .caret {
    margin-top: 24px;
    margin-bottom: -12px;
}
.first-pair .field.empty {
    padding-bottom: 28px;
}
.field.maker {
    margin-top: 67px;
}
.field.date {
    margin-top: 11px;
}
.date-value {
    display: flex;
    justify-content: space-between;
    align-items: center;
    height: 36px;
    padding-right: 6px;
}
.date-icon {
    width: 40px;
    height: 40px;
    margin-top: -3px;
    color: #616161;
}
.client-pair {
    margin-top: 107px;
}
.editor-label {
    margin-top: 56px;
    line-height: 36px;
    color: #7f7f7f;
}
.editor {
    margin-top: 3px;
    width: 1501px;
    border: 2px solid #ddd;
}
.editor-tools {
    height: 84px;
    background: #fafafa;
    display: flex;
    align-items: center;
    padding-left: 13px;
    color: #000;
}
.ed-btn {
    width: 68px;
    flex: none;
    display: flex;
    flex-direction: column;
    align-items: center;
    justify-content: center;
}
.ed-btn.muted {
    color: #ddd;
}
.ed-32 {
    width: 32px;
    height: 32px;
}
.ed-32.flip {
    transform: scaleX(-1);
}
.ed-36 {
    width: 36px;
    height: 36px;
}
.ed-sep {
    width: 2px;
    height: 54px;
    background: #ddd;
    flex: none;
}
.sep-a {
    margin-left: 6px;
}
.sep-b {
    margin-left: 7px;
}
.sep-c {
    margin-left: 5px;
}
.ed-size {
    margin-left: 28px;
    width: 117px;
    font-size: 27px;
    white-space: nowrap;
    color: #212121;
}
.ed-caret {
    width: 24px;
    height: 12px;
    flex: none;
    background: #000;
    clip-path: polygon(0 0, 100% 0, 50% 100%);
}
.size-caret {
    margin-left: 23px;
}
.near-caret {
    margin-left: 2px;
}
.align-caret {
    margin-left: 11px;
}
.bold-btn {
    margin-left: 14px;
}
.color-btn {
    margin-left: 3px;
}
.fill-btn {
    margin-left: 15px;
}
.list-btn {
    margin-left: 14px;
}
.align-btn {
    margin-left: 11px;
}
.outdent-btn {
    margin-left: 15px;
}
.link-btn {
    margin-left: 6px;
}
.clear-btn {
    margin-left: 8px;
}
.print-btn {
    margin-left: -3px;
}
.glyph-b {
    font-size: 34px;
    font-weight: 900;
    line-height: 36px;
}
.glyph-i {
    font-family: "DejaVu Sans Mono", monospace;
    font-size: 32px;
    font-weight: 700;
    font-style: italic;
    line-height: 36px;
}
.glyph-u {
    font-size: 32px;
    font-weight: 500;
    line-height: 26px;
    height: 29px;
    border-bottom: 3px solid #000;
    padding: 0 1px;
}
.glyph-s {
    font-size: 34px;
    font-weight: 500;
    line-height: 36px;
    text-decoration: line-through;
}
.glyph-a {
    font-size: 34px;
    font-weight: 500;
    line-height: 28px;
    height: 28px;
}
.bar-red,
.bar-yellow {
    display: block;
    width: 28px;
    height: 6px;
    margin-top: 0;
}
.bar-red {
    background: #f00;
}
.bar-yellow {
    background: #ff0;
    margin-top: 3px;
}
.fill-icon {
    width: 27px;
    height: 24px;
    margin-top: -2px;
}
.ed-list {
    width: 28px;
    height: 21px;
}
.ol-num {
    font-size: 8px;
    font-weight: 700;
}
.ed-lines {
    width: 28px;
    height: 24px;
}
.ed-clear {
    width: 24px;
    height: 24px;
}
.editor-area {
    height: 400px;
}
```
